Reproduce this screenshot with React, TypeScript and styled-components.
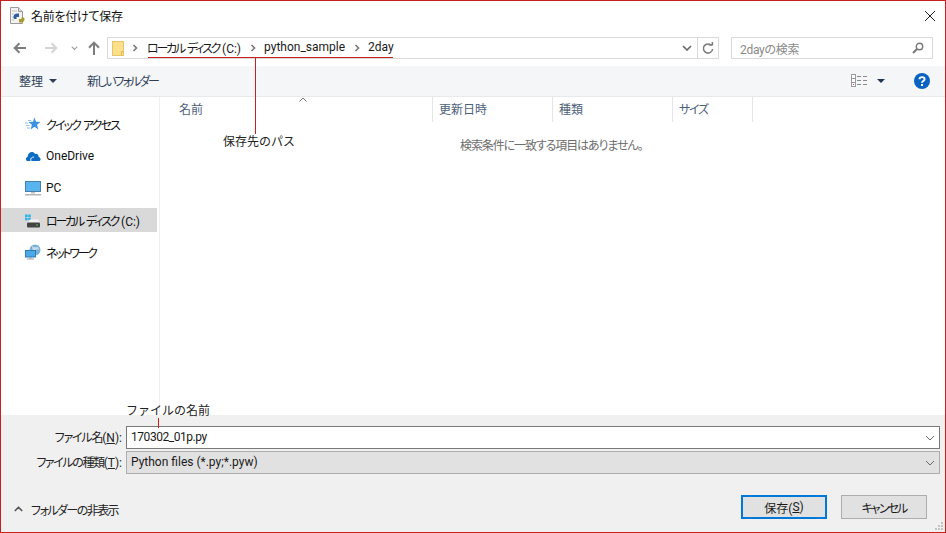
import React from 'react';
import styled, { createGlobalStyle } from 'styled-components';

const FONT = `Roboto, "Noto Sans CJK JP", sans-serif`;

const GlobalStyle = createGlobalStyle`
  html, body {
    margin: 0;
    padding: 0;
    background: #fff;
  }
  svg {
    flex: none;
  }
`;

const Dialog = styled.div`
  position: relative;
  box-sizing: border-box;
  width: 946px;
  height: 533px;
  border: 1px solid #c8201c;
  background: #fff;
  display: flex;
  flex-direction: column;
  font-family: ${FONT};
  font-size: 12px;
  font-feature-settings: 'palt';
  color: #1a1a1a;
  overflow: hidden;
`;

const TitleBar = styled.div`
  height: 29px;
  display: flex;
  align-items: center;
  padding: 0 10px 0 8px;
  gap: 6px;
  flex: none;
`;

const Title = styled.div`
  flex: 1;
  font-size: 12px;
  letter-spacing: -0.25px;
  color: #111;
`;

const AddressRow = styled.div`
  height: 36px;
  display: flex;
  align-items: center;
  padding: 0 0 0 12px;
  flex: none;
`;

const NavGroup = styled.div`
  width: 94px;
  display: flex;
  align-items: center;
  flex: none;
`;

const NavButton = styled.div<{ $ml: number }>`
  margin-left: ${(p) => p.$ml}px;
  display: flex;
  align-items: center;
`;

const AddressBox = styled.div`
  width: 612px;
  height: 22px;
  box-sizing: border-box;
  border: 1px solid #d9d9d9;
  display: flex;
  align-items: center;
  padding-left: 4px;
  flex: none;
`;

const Crumbs = styled.div`
  flex: 1;
  display: flex;
  align-items: center;
`;

const Crumb = styled.span<{ $track?: number }>`
  font-size: 12px;
  letter-spacing: ${(p) => p.$track ?? 0}px;
  word-spacing: ${(p) => (p.$track ? 2 : 0)}px;
  margin-bottom: 2px;
  color: #1a1a1a;
  white-space: pre;
`;

// latin bits keep their own spacing inside the tightened kana labels
const Plain = styled.span`
  letter-spacing: 0;
  word-spacing: 0;
`;

const Sep = styled.span<{ $m: string }>`
  display: flex;
  margin: ${(p) => p.$m};
`;

const AddressEnd = styled.div<{ $w: number; $line?: boolean }>`
  width: ${(p) => p.$w}px;
  height: 100%;
  display: flex;
  align-items: center;
  justify-content: center;
  flex: none;
  border-left: ${(p) => (p.$line ? '1px solid #d9d9d9' : 'none')};
`;

const SearchBox = styled.div`
  width: 202px;
  height: 22px;
  box-sizing: border-box;
  margin-left: 12px;
  border: 1px solid #d9d9d9;
  display: flex;
  align-items: center;
  justify-content: space-between;
  padding: 0 8px;
  font-size: 12px;
  letter-spacing: -0.3px;
  color: #8a8a8a;
  flex: none;
`;

const Toolbar = styled.div`
  height: 31px;
  box-sizing: border-box;
  background: #f5f6f7;
  border-bottom: 1px solid #e8e9ea;
  display: flex;
  align-items: center;
  padding: 0 15px 1px 18px;
  flex: none;
  color: #33415a;
`;

const ToolText = styled.span<{ $track?: number }>`
  font-size: 12px;
  letter-spacing: ${(p) => p.$track ?? 0}px;
  color: #2f3f58;
`;

const OrganizeCaret = styled.span`
  display: flex;
  margin: 0 30px 0 6px;
`;

const ToolSpacer = styled.div`
  flex: 1;
`;

const ViewIcon = styled.span`
  display: flex;
  margin-right: 9px;
`;

const HelpIcon = styled.span`
  display: flex;
  margin-left: 29px;
`;

const Main = styled.div`
  flex: 1;
  display: flex;
  min-height: 0;
`;

const Sidebar = styled.div`
  width: 159px;
  box-sizing: border-box;
  border-right: 1px solid #f0f0f0;
  padding-top: 15px;
  flex: none;
`;

const NavItem = styled.div<{ $active?: boolean }>`
  height: 24px;
  margin-bottom: 8px;
  width: 156px;
  background: ${(p) => (p.$active ? '#d9d9d9' : 'transparent')};
  display: flex;
  align-items: center;
  padding-left: 24px;
  box-sizing: border-box;
  gap: 5px;
  font-size: 12px;
  color: #111;
`;

const NavLabel = styled.span<{ $track: number }>`
  letter-spacing: ${(p) => p.$track}px;
  word-spacing: 2px;
  white-space: pre;
`;

const Files = styled.div`
  position: relative;
  flex: 1;
  display: flex;
  flex-direction: column;
`;

const HeaderRow = styled.div`
  height: 25px;
  display: flex;
  flex: none;
`;

const HeaderCell = styled.div<{ $w: number; $pad: number; $track: number }>`
  width: ${(p) => p.$w}px;
  box-sizing: border-box;
  border-right: 1px solid #e5e5e5;
  padding: 0 0 2px ${(p) => p.$pad}px;
  font-size: 12px;
  letter-spacing: ${(p) => p.$track}px;
  color: #4c607a;
  display: flex;
  align-items: center;
`;

const SortCaret = styled.span`
  position: absolute;
  left: 139px;
  top: 0;
  display: flex;
`;

const EmptyNote = styled.div`
  margin-top: 14px;
  padding-left: 300px;
  font-size: 12px;
  letter-spacing: -1.1px;
  color: #6d6d6d;
`;

const Bottom = styled.div`
  height: 117px;
  background: #f0f0f0;
  flex: none;
  padding: 11px 5px 0 0;
  box-sizing: border-box;
  display: flex;
  flex-direction: column;
`;

const FieldRow = styled.div`
  display: flex;
  align-items: center;
  height: 23px;
  margin-bottom: 2px;
`;

const FieldLabel = styled.div<{ $track: number }>`
  width: 121px;
  margin: 0 4px 2px 0;
  text-align: right;
  font-size: 12px;
  letter-spacing: ${(p) => p.$track}px;
  color: #222;
  white-space: nowrap;
  flex: none;
`;

const Underline = styled.span`
  text-decoration: underline;
`;

const ComboBox = styled.div<{ $filled?: boolean }>`
  flex: 1;
  height: 23px;
  box-sizing: border-box;
  border: 1px solid ${(p) => (p.$filled ? '#adadad' : '#7a7a7a')};
  background: ${(p) => (p.$filled ? '#e1e1e1' : '#fff')};
  display: flex;
  align-items: center;
  justify-content: space-between;
  padding: 0 4px;
  font-size: 12px;
  color: #1a1a1a;
`;

const ComboValue = styled.span<{ $track: number }>`
  letter-spacing: ${(p) => p.$track}px;
  margin-bottom: 2px;
`;

const Footer = styled.div`
  display: flex;
  align-items: center;
  margin-top: 19px;
  padding: 0 13px 0 13px;
`;

const FolderToggle = styled.div`
  flex: 1;
  display: flex;
  align-items: center;
  gap: 8px;
  padding-top: 4px;
  font-size: 12px;
  letter-spacing: -1.55px;
  color: #222;
`;

const DialogButton = styled.div<{ $primary?: boolean; $track: number }>`
  width: 86px;
  height: 24px;
  box-sizing: border-box;
  margin-left: 14px;
  border: ${(p) => (p.$primary ? '2px solid #0078d7' : '1px solid #adadad')};
  background: #e1e1e1;
  display: flex;
  align-items: center;
  justify-content: center;
  font-size: 12px;
  letter-spacing: ${(p) => p.$track}px;
  color: #1a1a1a;
`;

const Grip = styled.svg`
  position: absolute;
  right: 1px;
  bottom: 1px;
`;

const RedLine = styled.div`
  position: absolute;
  background: #c8201c;
`;

const PathUnderline = styled(RedLine)`
  left: 147px;
  top: 56px;
  width: 245px;
  height: 1px;
`;

const PathLeader = styled(RedLine)`
  left: 254px;
  top: 57px;
  width: 1px;
  height: 76px;
`;

const NameLeader = styled(RedLine)`
  left: 157px;
  top: 417px;
  width: 1px;
  height: 10px;
`;

const Note = styled.div`
  position: absolute;
  font-size: 12px;
  font-feature-settings: normal;
  color: #222;
  white-space: nowrap;
  line-height: 16px;
`;

const PathNote = styled(Note)`
  left: 222px;
  top: 133px;
`;

const NameNote = styled(Note)`
  left: 125px;
  top: 402px;
`;

const Chevron = ({ color = '#777' }: { color?: string }) => (
  <svg width="8" height="8" viewBox="0 0 8 8">
    <path d="M2.5 1 L5.5 4 L2.5 7" fill="none" stroke={color} strokeWidth="1.6" />
  </svg>
);

const ChevronDown = ({ color = '#6a6a6a', w = 1, size = 10 }: { color?: string; w?: number; size?: number }) => (
  <svg width={size} height={size * 0.6} viewBox="0 0 10 6">
    <path d="M1 1 L5 5 L9 1" fill="none" stroke={color} strokeWidth={w} />
  </svg>
);

const Arrow = ({ color, flip }: { color: string; flip?: boolean }) => (
  <svg width="14" height="12" viewBox="0 0 14 12" style={flip ? { transform: 'scaleX(-1)' } : undefined}>
    <path d="M13 6 H2 M6.5 1.2 L1.7 6 L6.5 10.8" fill="none" stroke={color} strokeWidth="2" />
  </svg>
);

const PyFileIcon = () => (
  <svg width="16" height="17" viewBox="0 0 16 17">
    <path d="M1.5 0.5 H9.5 L13.5 4.5 V16.5 H1.5 Z" fill="#f2f2f2" stroke="#9a9a9a" />
    <path d="M3 4 H8 M3 7 H5 M3 10 H5 M3 13 H5" stroke="#c4c4c4" />
    <path d="M9.5 0.5 V4.5 H13.5" fill="#ddd" stroke="#9a9a9a" />
    <path d="M4.5 10 C4.5 7 7 6 10 6.5 V10 H7.5 V12 H5.5 C4.8 12 4.5 11 4.5 10 Z" fill="#2f5f9e" />
    <path d="M15.5 12 C15.5 15 13 16 10 15.5 V12 H12.5 V10.5 H14.5 C15.2 10.5 15.5 11 15.5 12 Z" fill="#a89a2c" />
  </svg>
);

const FolderIcon = () => (
  <svg width="12" height="15" viewBox="0 0 12 15">
    <rect x="0.5" y="0.5" width="11" height="14" fill="#fcdf8a" stroke="#e6c66d" />
    <path d="M9.5 15 V10.5 H12" fill="none" stroke="#e2b84c" />
  </svg>
);

const RefreshIcon = () => (
  <svg width="12" height="13" viewBox="0 0 12 13">
    <path d="M9.6 3.6 A4.6 4.6 0 1 0 10.6 7" fill="none" stroke="#7a7a7a" strokeWidth="1.5" />
    <path d="M6.5 2.8 H10.4 V0" fill="none" stroke="#7a7a7a" strokeWidth="1.5" />
  </svg>
);

const SearchIcon = () => (
  <svg width="12" height="12" viewBox="0 0 12 12">
    <circle cx="7.5" cy="4.5" r="3.2" fill="none" stroke="#777" strokeWidth="1.4" />
    <path d="M5 7 L1 11" stroke="#777" strokeWidth="2" />
  </svg>
);

const DetailsIcon = () => (
  <svg width="17" height="13" viewBox="0 0 17 13">
    <rect x="0.5" y="0.5" width="4" height="4" fill="#fff" stroke="#9a9a9a" />
    <rect x="0.5" y="4.5" width="4" height="4" fill="#fff" stroke="#9a9a9a" />
    <rect x="0.5" y="8.5" width="4" height="4" fill="#fff" stroke="#9a9a9a" />
    <path d="M6 2.5 H10 M12 2.5 H16 M6 6.5 H10 M12 6.5 H16 M6 10.5 H10 M12 10.5 H16" stroke="#8a8a8a" />
    <rect x="2" y="10" width="1" height="1" fill="#c44" />
  </svg>
);

const SmallCaret = ({ color }: { color: string }) => (
  <svg width="8" height="4" viewBox="0 0 8 4">
    <path d="M0 0 H8 L4 4 Z" fill={color} />
  </svg>
);

const HelpBadge = () => (
  <svg width="16" height="16" viewBox="0 0 16 16">
    <circle cx="8" cy="8" r="8" fill="#0a63c2" />
    <path d="M5.5 6.2 C5.5 3.4 10.6 3.4 10.6 6.2 C10.6 8 8 8 8 9.8" fill="none" stroke="#fff" strokeWidth="1.9" />
    <rect x="7" y="11" width="2" height="2" fill="#fff" />
  </svg>
);

const StarIcon = () => (
  <svg width="16" height="14" viewBox="0 0 16 14">
    <path d="M9.5 0.5 L11 4.8 L15.5 5 L12 7.8 L13.3 12.5 L9.5 9.8 L5.6 12.5 L6.9 7.8 L3.5 5 L8 4.8 Z" fill="#3a92e0" />
    <path d="M0 6 H3 M1 8.5 H4.5 M2 11 H5 M3 3.5 H6" stroke="#8cc2ee" />
  </svg>
);

const CloudIcon = () => (
  <svg width="16" height="14" viewBox="0 0 16 14">
    <path d="M3 12 C0.5 12 0 8.5 2.5 8 C3 3 8 1.5 10 5 C12 4 14 6 13.5 8 C16 8 16.5 12 13.5 12 Z" fill="#0f6cc4" />
    <path d="M6 12 C5 9.5 7 7.8 9 8.2" fill="none" stroke="#fff" />
  </svg>
);

const MonitorIcon = () => (
  <svg width="16" height="15" viewBox="0 0 16 15">
    <rect x="0.5" y="0.5" width="15" height="10" fill="#58b5ef" stroke="#4a7fa8" />
    <rect x="6" y="11" width="4" height="1.5" fill="#b9c4cc" />
    <rect x="0" y="13" width="16" height="1.5" fill="#b5b5b5" />
  </svg>
);

const DriveIcon = () => (
  <svg width="16" height="16" viewBox="0 0 16 16">
    <rect x="0" y="2.5" width="2.6" height="2.6" fill="#2fb2ea" />
    <rect x="3.2" y="2.5" width="2.6" height="2.6" fill="#2fb2ea" />
    <rect x="0" y="5.7" width="2.6" height="2.6" fill="#2fb2ea" />
    <rect x="3.2" y="5.7" width="2.6" height="2.6" fill="#2fb2ea" />
    <path d="M3 10.5 L5 7.5 H13 L15 10.5 Z" fill="#f2f2f2" />
    <rect x="2" y="10.5" width="13" height="5" rx="1" fill="#444" />
    <rect x="11" y="12.5" width="2" height="1" fill="#3fcf5f" />
  </svg>
);

const NetworkIcon = () => (
  <svg width="16" height="16" viewBox="0 0 16 16">
    <circle cx="10" cy="6" r="5.5" fill="#7ab0d6" />
    <path d="M7 2 C9 4 12 3 13 3 L14 6 C11 5 9 6 8 8 Z" fill="#c8dcea" />
    <rect x="0.5" y="6.5" width="10" height="6.5" fill="#4ba8e6" stroke="#2f7db5" />
    <rect x="4" y="13" width="3" height="1.5" fill="#9aa8b2" />
    <rect x="2" y="14.5" width="7" height="1" fill="#9aa8b2" />
  </svg>
);

const CloseIcon = () => (
  <svg width="10" height="10" viewBox="0 0 10 10">
    <path d="M0 0 L10 10 M10 0 L0 10" stroke="#222" strokeWidth="1" />
  </svg>
);

const navItems = [
  { icon: <StarIcon />, label: 'クイック アクセス', track: -1.9 },
  { icon: <CloudIcon />, label: 'OneDrive', track: 0 },
  { icon: <MonitorIcon />, label: 'PC', track: 0 },
  { icon: <DriveIcon />, label: 'ローカル ディスク ', suffix: '(C:)', track: -2.2, active: true },
  { icon: <NetworkIcon />, label: 'ネットワーク', track: -2.3 },
];

const columns = [
  { label: '名前', w: 273, pad: 19, track: 0 },
  { label: '更新日時', w: 120, pad: 6, track: 0 },
  { label: '種類', w: 120, pad: 6, track: 0 },
  { label: 'サイズ', w: 80, pad: 6, track: -1.3 },
];

export default function App() {
  return (
    <>
      <GlobalStyle />
      <Dialog>
        <TitleBar>
          <PyFileIcon />
          <Title>名前を付けて保存</Title>
          <CloseIcon />
        </TitleBar>

        <AddressRow>
          <NavGroup>
            <NavButton $ml={0}><Arrow color="#7d7d7d" /></NavButton>
            <NavButton $ml={17}><Arrow color="#d4d4d4" flip /></NavButton>
            <NavButton $ml={13}><ChevronDown color="#a0a0a0" w={1.6} size={7} /></NavButton>
            <NavButton $ml={10}>
              <svg width="12" height="14" viewBox="0 0 12 14">
                <path d="M6 14 V2 M1 6.8 L6 1.6 L11 6.8" fill="none" stroke="#7d7d7d" strokeWidth="2" />
              </svg>
            </NavButton>
          </NavGroup>
          <AddressBox>
            <FolderIcon />
            <Crumbs>
              <Sep $m="0 8px 0 7px"><Chevron /></Sep>
              <Crumb $track={-2.2}>ローカル ディスク <Plain>(C:)</Plain></Crumb>
              <Sep $m="0 7px 0 8px"><Chevron /></Sep>
              <Crumb>python_sample</Crumb>
              <Sep $m="0 7px 0 8px"><Chevron /></Sep>
              <Crumb>2day</Crumb>
            </Crumbs>
            <AddressEnd $w={20}><ChevronDown color="#666" w={1.6} /></AddressEnd>
            <AddressEnd $w={20} $line><RefreshIcon /></AddressEnd>
          </AddressBox>
          <SearchBox>
            <span>2dayの検索</span>
            <SearchIcon />
          </SearchBox>
        </AddressRow>

        <Toolbar>
          <ToolText>整理</ToolText>
          <OrganizeCaret><SmallCaret color="#2f3f58" /></OrganizeCaret>
          <ToolText $track={-2}>新しいフォルダー</ToolText>
          <ToolSpacer />
          <ViewIcon><DetailsIcon /></ViewIcon>
          <SmallCaret color="#1f3558" />
          <HelpIcon><HelpBadge /></HelpIcon>
        </Toolbar>

        <Main>
          <Sidebar>
            {navItems.map((item) => (
              <NavItem key={item.label} $active={item.active}>
                {item.icon}
                <NavLabel $track={item.track}>
                  {item.label}
                  {item.suffix && <Plain>{item.suffix}</Plain>}
                </NavLabel>
              </NavItem>
            ))}
          </Sidebar>
          <Files>
            <SortCaret>
              <svg width="8" height="5" viewBox="0 0 8 5">
                <path d="M0.5 4.5 L4 1 L7.5 4.5" fill="none" stroke="#777" />
              </svg>
            </SortCaret>
            <HeaderRow>
              {columns.map((c) => (
                <HeaderCell key={c.label} $w={c.w} $pad={c.pad} $track={c.track}>{c.label}</HeaderCell>
              ))}
            </HeaderRow>
            <EmptyNote>検索条件に一致する項目はありません。</EmptyNote>
          </Files>
        </Main>

        <Bottom>
          <FieldRow>
            <FieldLabel $track={-1.2}>ファイル名<Plain>(<Underline>N</Underline>):</Plain></FieldLabel>
            <ComboBox>
              <ComboValue $track={-0.45}>170302_01p.py</ComboValue>
              <ChevronDown />
            </ComboBox>
          </FieldRow>
          <FieldRow>
            <FieldLabel $track={-1.4}>ファイルの種類<Plain>(<Underline>T</Underline>):</Plain></FieldLabel>
            <ComboBox $filled>
              <ComboValue $track={0}>Python files (*.py;*.pyw)</ComboValue>
              <ChevronDown />
            </ComboBox>
          </FieldRow>
          <Footer>
            <FolderToggle>
              <svg width="9" height="6" viewBox="0 0 9 6">
                <path d="M0.8 5 L4.5 1.3 L8.2 5" fill="none" stroke="#555" strokeWidth="1.6" />
              </svg>
              フォルダーの非表示
            </FolderToggle>
            <DialogButton $primary $track={0}>保存(<Underline>S</Underline>)</DialogButton>
            <DialogButton $track={-1.9}>キャンセル</DialogButton>
          </Footer>
        </Bottom>

        <Grip width="10" height="10" viewBox="0 0 10 10">
          <path d="M7 1h2v2H7zM4 4h2v2H4zM7 4h2v2H7zM1 7h2v2H1zM4 7h2v2H4zM7 7h2v2H7z" fill="#c4c4c4" />
        </Grip>

        <PathUnderline />
        <PathLeader />
        <PathNote>保存先のパス</PathNote>
        <NameNote>ファイルの名前</NameNote>
        <NameLeader />
      </Dialog>
    </>
  );
}
